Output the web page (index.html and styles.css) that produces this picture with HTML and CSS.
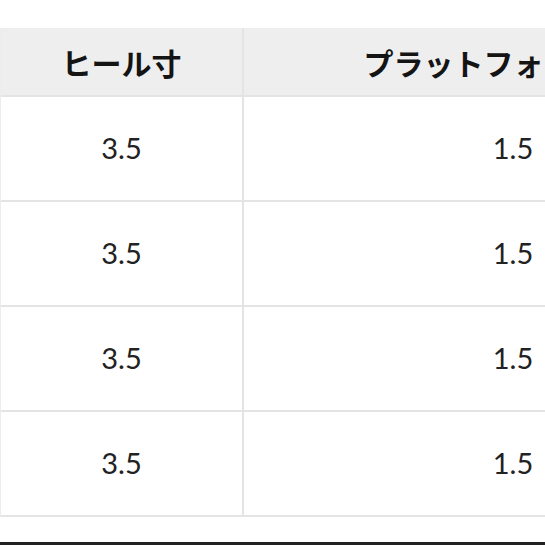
FILE: index.html
```html
<!DOCTYPE html>
<html lang="ja">
<head>
<meta charset="utf-8">
<link rel="stylesheet" href="styles.css">
</head>
<body>
<div class="page">
  <div class="table">
    <div class="cell head">ヒール寸</div>
    <div class="cell head">プラットフォーム高さ</div>
    <div class="cell num">3.5</div>
    <div class="cell num">1.5</div>
    <div class="cell num">3.5</div>
    <div class="cell num">1.5</div>
    <div class="cell num">3.5</div>
    <div class="cell num">1.5</div>
    <div class="cell num">3.5</div>
    <div class="cell num">1.5</div>
  </div>
  <div class="bottom-bar"></div>
</div>
</body>
</html>
```

FILE: styles.css
```css
html, body {
  margin: 0;
  padding: 0;
  background: #ffffff;
  overflow: hidden;
}
.page {
  width: 545px;
  height: 545px;
  overflow: hidden;
  display: flex;
  flex-direction: column;
  padding-top: 28px;
  box-sizing: border-box;
}
.table {
  display: grid;
  grid-template-columns: 241px 538px;
  grid-template-rows: 67px 103px 103px 103px 103px;
  gap: 2px;
  width: 782px;
  background: #e4e4e4;
  border-left: 1px solid #ececec;
  border-bottom: 2px solid #e4e4e4;
  flex: none;
}
.cell {
  display: flex;
  align-items: center;
  justify-content: center;
  background: #ffffff;
  white-space: nowrap;
}
.head {
  background: #eeeeee;
  font-family: "Noto Sans CJK JP", "Noto Sans", sans-serif;
  font-weight: 700;
  font-size: 30px;
  color: #141414;
}
.num {
  font-family: Lato, "Liberation Sans", sans-serif;
  font-size: 29px;
  color: #222222;
  padding-bottom: 2px;
}
.bottom-bar {
  margin-top: auto;
  height: 3px;
  background: #222222;
  flex: none;
}
```
